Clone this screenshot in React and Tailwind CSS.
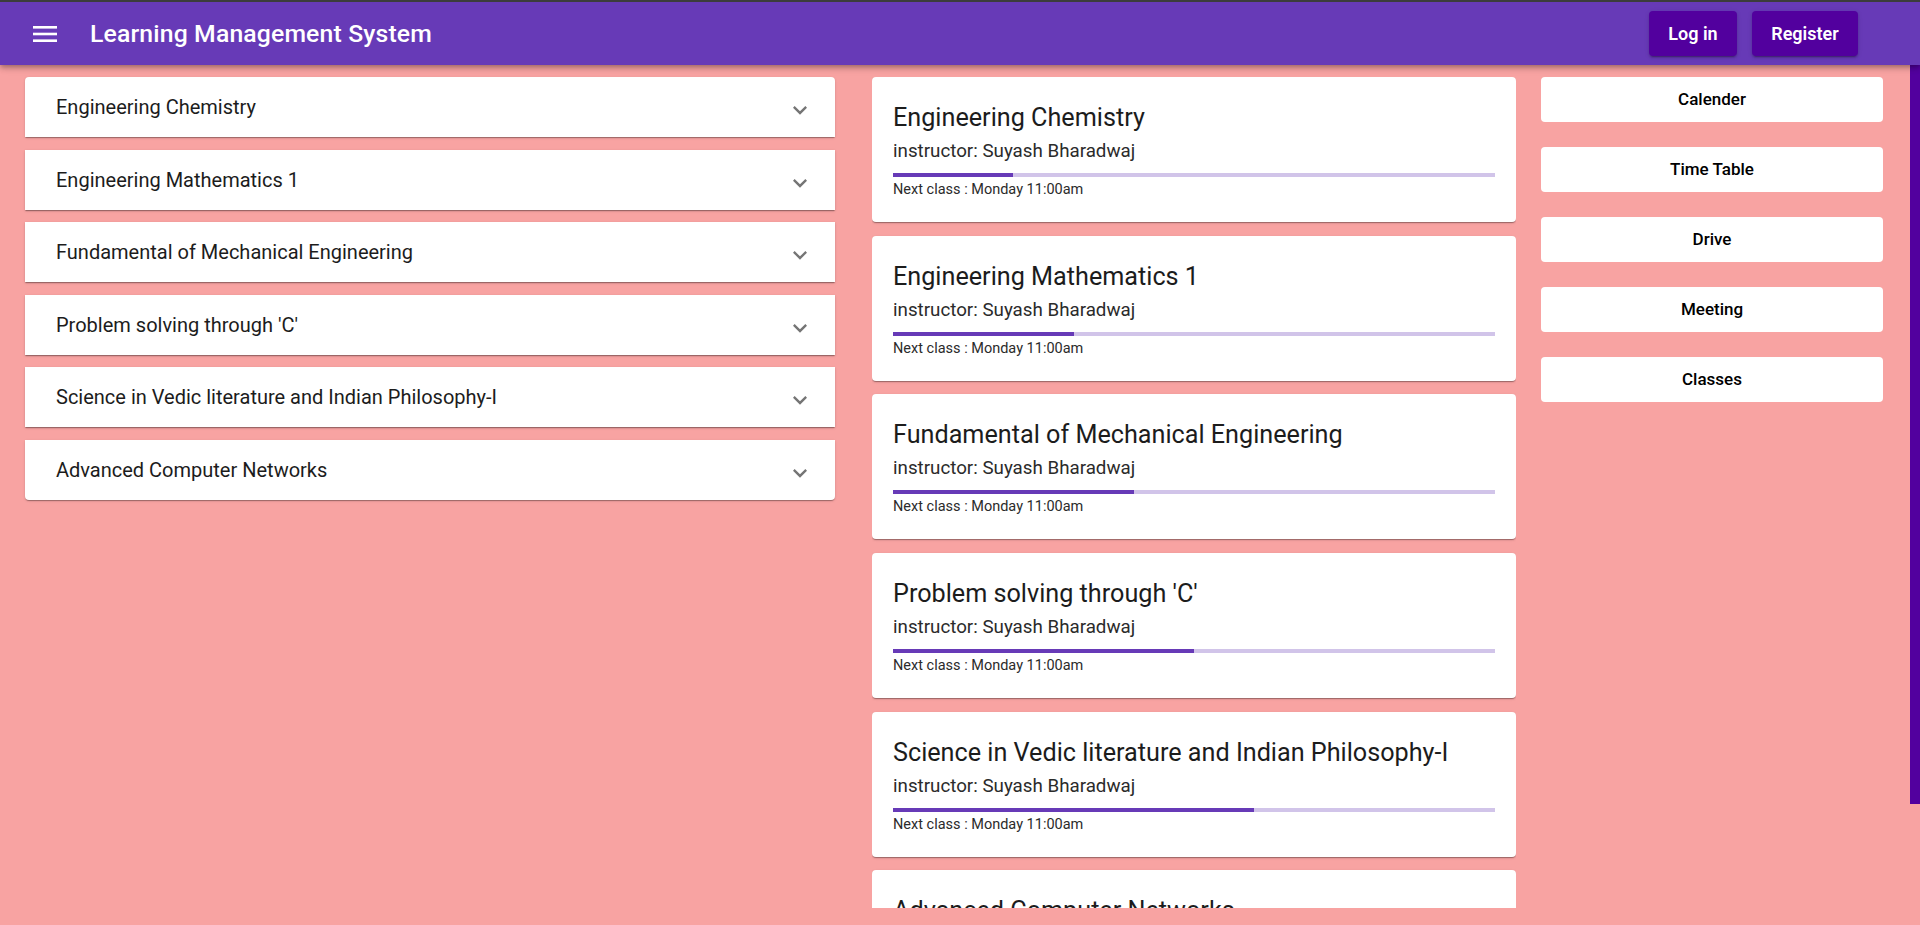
import { useState } from "react";

const courses = [
  { name: "Engineering Chemistry", progress: 20 },
  { name: "Engineering Mathematics 1", progress: 30 },
  { name: "Fundamental of Mechanical Engineering", progress: 40 },
  { name: "Problem solving through 'C'", progress: 50 },
  { name: "Science in Vedic literature and Indian Philosophy-I", progress: 60 },
  { name: "Advanced Computer Networks", progress: 70 },
];

const links = ["Calender", "Time Table", "Drive", "Meeting", "Classes"];

const cardShadow =
  "shadow-[0_2px_1px_-1px_rgba(0,0,0,0.2),0_1px_1px_0_rgba(0,0,0,0.14),0_1px_3px_0_rgba(0,0,0,0.12)]";

const ExpandIcon = () => (
  <svg width="28" height="28" viewBox="0 0 24 24" fill="#757575">
    <path d="M16.59 8.59 12 13.17 7.41 8.59 6 10l6 6 6-6z" />
  </svg>
);

const Header = () => (
  <header className="h-[65px] border-t-2 border-[#3c3c3c] bg-[#673ab7] flex items-center shadow-[0_2px_4px_-1px_rgba(0,0,0,0.2),0_4px_5px_0_rgba(0,0,0,0.14),0_1px_10px_0_rgba(0,0,0,0.12)] relative z-10">
    <button className="ml-[33px] w-[24px] h-[24px] flex items-center justify-center">
      <svg width="24" height="16" viewBox="0 0 24 16" fill="white">
        <rect x="0" y="0" width="24" height="2.6" />
        <rect x="0" y="6.7" width="24" height="2.6" />
        <rect x="0" y="13.4" width="24" height="2.6" />
      </svg>
    </button>
    <h1 className="ml-[33px] text-white text-[24.75px] font-medium tracking-[0.15px]">
      Learning Management System
    </h1>
    <div className="ml-auto mr-[62px] flex gap-[15px]">
      <button className="h-[45px] w-[88px] rounded-[4px] bg-[#52009e] text-white text-[18px] font-semibold shadow-[0_3px_1px_-2px_rgba(0,0,0,0.2),0_2px_2px_0_rgba(0,0,0,0.14),0_1px_5px_0_rgba(0,0,0,0.12)]">
        Log in
      </button>
      <button className="h-[45px] w-[106px] rounded-[4px] bg-[#52009e] text-white text-[18px] font-semibold shadow-[0_3px_1px_-2px_rgba(0,0,0,0.2),0_2px_2px_0_rgba(0,0,0,0.14),0_1px_5px_0_rgba(0,0,0,0.12)]">
        Register
      </button>
    </div>
  </header>
);

const AccordionList = () => {
  const [open, setOpen] = useState(null);
  return (
    <div className="w-[810px] ml-[25px] flex flex-col gap-[12.5px]">
      {courses.map((c, i) => (
        <div
          key={c.name}
          className={`bg-white ${cardShadow} ${i === 0 ? "rounded-t-[4px]" : ""} ${
            i === courses.length - 1 ? "rounded-b-[4px]" : ""
          }`}
        >
          <button
            onClick={() => setOpen(open === i ? null : i)}
            className="w-full h-[60px] flex items-center pl-[31px] pr-[21px] text-left"
          >
            <span className="text-[20px] text-[#1c1c1c] flex-1">{c.name}</span>
            <span className={`translate-y-[3px] ${open === i ? "rotate-180" : ""}`}>
              <ExpandIcon />
            </span>
          </button>
        </div>
      ))}
    </div>
  );
};

const CourseCard = ({ course }) => (
  <div className={`shrink-0 h-[145px] bg-white rounded-[4px] ${cardShadow} px-[21px] pt-[25px]`}>
    <h2 className="text-[25.2px] leading-[32px] text-[#1c1c1c]">{course.name}</h2>
    <p className="mt-[3px] text-[18.75px] leading-[28px] text-[#2b2b2b]">instructor: Suyash Bharadwaj</p>
    <div className="mt-[8px] h-[4px] bg-[#d1c4e9]">
      <div className="h-full bg-[#673ab7]" style={{ width: `${course.progress}%` }} />
    </div>
    <p className="mt-[3px] text-[14.5px] leading-[20px] text-[#2b2b2b]">Next class : Monday 11:00am</p>
  </div>
);

const SideLinks = () => (
  <div className="w-[342px] ml-[25px] flex flex-col gap-[25px]">
    {links.map((l) => (
      <button
        key={l}
        className="h-[45px] bg-white rounded-[4px] text-[17px] font-medium text-black"
      >
        {l}
      </button>
    ))}
  </div>
);

export default function App() {
  return (
    <div className="min-h-screen h-[925px] overflow-hidden bg-[#f8a3a2] font-['Roboto',sans-serif]">
      <Header />
      <div className="flex h-[860px]">
        <div className="flex-1 flex items-start pt-[12px]">
          <AccordionList />
          <div className="ml-[37px] w-[644px] h-[831px] overflow-hidden flex flex-col gap-[13.7px]">
            {courses.map((c) => (
              <CourseCard key={c.name} course={c} />
            ))}
          </div>
          <SideLinks />
        </div>
        <div className="w-[10px]">
          <div className="h-[739px] bg-[#52009e]" />
        </div>
      </div>
    </div>
  );
}
